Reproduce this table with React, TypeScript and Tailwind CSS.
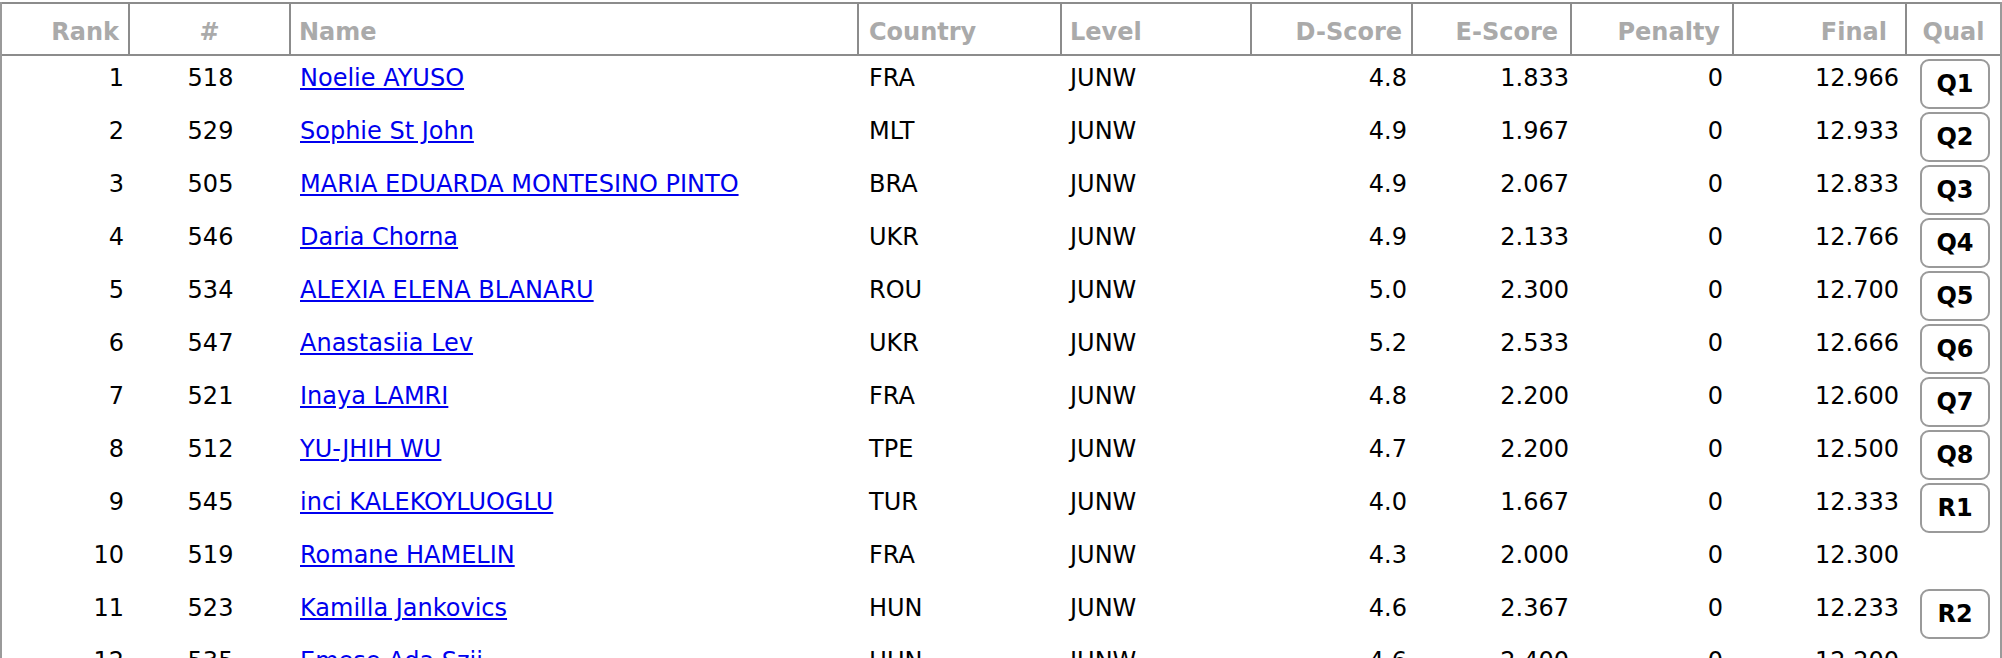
import React from "react";

type Row = {
  rank: number;
  bib: number;
  name: string;
  country: string;
  level: string;
  d: string;
  e: string;
  pen: string;
  final: string;
  qual?: string;
};

const rows: Row[] = [
  { rank: 1, bib: 518, name: "Noelie AYUSO", country: "FRA", level: "JUNW", d: "4.8", e: "1.833", pen: "0", final: "12.966", qual: "Q1" },
  { rank: 2, bib: 529, name: "Sophie St John", country: "MLT", level: "JUNW", d: "4.9", e: "1.967", pen: "0", final: "12.933", qual: "Q2" },
  { rank: 3, bib: 505, name: "MARIA EDUARDA MONTESINO PINTO", country: "BRA", level: "JUNW", d: "4.9", e: "2.067", pen: "0", final: "12.833", qual: "Q3" },
  { rank: 4, bib: 546, name: "Daria Chorna", country: "UKR", level: "JUNW", d: "4.9", e: "2.133", pen: "0", final: "12.766", qual: "Q4" },
  { rank: 5, bib: 534, name: "ALEXIA ELENA BLANARU", country: "ROU", level: "JUNW", d: "5.0", e: "2.300", pen: "0", final: "12.700", qual: "Q5" },
  { rank: 6, bib: 547, name: "Anastasiia Lev", country: "UKR", level: "JUNW", d: "5.2", e: "2.533", pen: "0", final: "12.666", qual: "Q6" },
  { rank: 7, bib: 521, name: "Inaya LAMRI", country: "FRA", level: "JUNW", d: "4.8", e: "2.200", pen: "0", final: "12.600", qual: "Q7" },
  { rank: 8, bib: 512, name: "YU-JHIH WU", country: "TPE", level: "JUNW", d: "4.7", e: "2.200", pen: "0", final: "12.500", qual: "Q8" },
  { rank: 9, bib: 545, name: "inci KALEKOYLUOGLU", country: "TUR", level: "JUNW", d: "4.0", e: "1.667", pen: "0", final: "12.333", qual: "R1" },
  { rank: 10, bib: 519, name: "Romane HAMELIN", country: "FRA", level: "JUNW", d: "4.3", e: "2.000", pen: "0", final: "12.300" },
  { rank: 11, bib: 523, name: "Kamilla Jankovics", country: "HUN", level: "JUNW", d: "4.6", e: "2.367", pen: "0", final: "12.233", qual: "R2" },
  { rank: 12, bib: 535, name: "Emese Ada Szii", country: "HUN", level: "JUNW", d: "4.6", e: "2.400", pen: "0", final: "12.200" },
];

const cols = "grid grid-cols-[128px_161px_568px_203px_190px_161px_159px_162px_173px_1fr]";

export default function App() {
  const th = "border-r-2 border-[#8c8c8c] pt-[14px] leading-[29px] font-bold text-[#aaaaaa]";
  const td = "pt-[8px] leading-[29px]";

  return (
    <div className="min-h-screen bg-white pt-[2px] text-[24px] text-black" style={{ fontFamily: '"DejaVu Sans", Verdana, sans-serif' }}>
      <div className="w-[2002px] border-x-2 border-[#9a9a9a]">
        {/* header */}
        <div className={`${cols} h-[54px] border-y-2 border-[#8c8c8c]`}>
          <div className={`${th} text-right pr-[9px]`}>Rank</div>
          <div className={`${th} text-center`}>#</div>
          <div className={`${th} pl-[8px]`}>Name</div>
          <div className={`${th} pl-[10px]`}>Country</div>
          <div className={`${th} pl-[8px]`}>Level</div>
          <div className={`${th} text-right pr-[9px]`}>D-Score</div>
          <div className={`${th} text-right pr-[12px]`}>E-Score</div>
          <div className={`${th} text-right pr-[12px]`}>Penalty</div>
          <div className={`${th} text-right pr-[18px]`}>Final</div>
          <div className="pt-[14px] leading-[29px] font-bold text-[#aaaaaa] text-center">Qual</div>
        </div>

        {/* body */}
        {rows.map((r) => (
          <div key={r.rank} className={`${cols} h-[53px]`}>
            <div className={`${td} text-right pr-[6px]`}>{r.rank}</div>
            <div className={`${td} text-center`}>{r.bib}</div>
            <div className={`${td} pl-[9px]`}>
              <a href="#" className="text-[#0000ee] underline">
                {r.name}
              </a>
            </div>
            <div className={`${td} pl-[10px]`}>{r.country}</div>
            <div className={`${td} pl-[8px]`}>{r.level}</div>
            <div className={`${td} text-right pr-[6px]`}>{r.d}</div>
            <div className={`${td} text-right pr-[3px]`}>{r.e}</div>
            <div className={`${td} text-right pr-[11px]`}>{r.pen}</div>
            <div className={`${td} text-right pr-[8px]`}>{r.final}</div>
            <div className="pl-[13px]">
              {r.qual && (
                <div className="mt-[3px] flex h-[50px] w-[70px] items-center justify-center rounded-[9px] border-2 border-[#9a9a9a] text-[24px] font-bold">
                  {r.qual}
                </div>
              )}
            </div>
          </div>
        ))}
      </div>
    </div>
  );
}
